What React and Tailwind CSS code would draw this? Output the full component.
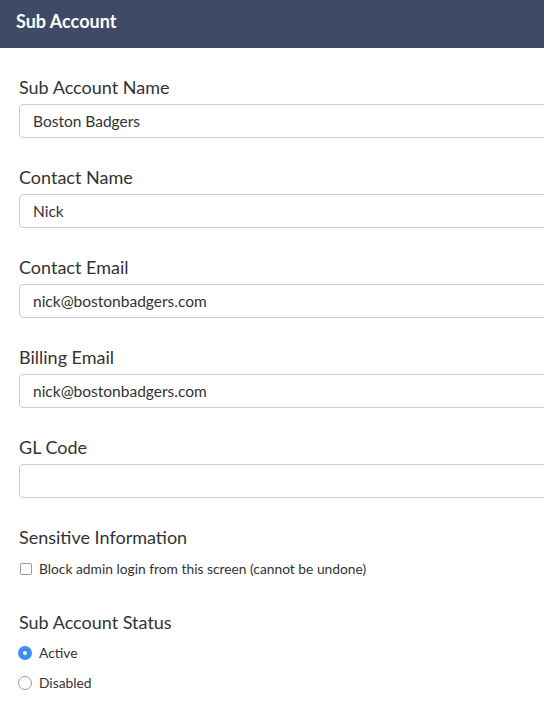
import React from "react";

function Field({ label, value }) {
  return (
    <div className="mb-[29px]">
      <div className="text-[18px] leading-[20px] text-[#333] mb-[7px]">{label}</div>
      <div className="h-[34px] w-[620px] border border-[#cccccc] rounded-[4px] bg-white flex items-center pl-[13px] pt-[1px] text-[15.5px] text-[#333]">
        {value}
      </div>
    </div>
  );
}

function Radio({ checked, label }) {
  return (
    <div className="flex items-center h-[30px]">
      {checked ? (
        <span className="w-[14px] h-[14px] rounded-full bg-[#3b8ef2] flex items-center justify-center ml-[-1px]">
          <span className="w-[4px] h-[4px] rounded-full bg-white" />
        </span>
      ) : (
        <span className="w-[14px] h-[14px] rounded-full border border-[#9a9a9a] bg-white ml-[-1px]" />
      )}
      <span className="ml-[7px] text-[13.8px] text-[#333]">{label}</span>
    </div>
  );
}

export default function App() {
  return (
    <div className="w-[544px] h-[711px] overflow-hidden bg-white" style={{ fontFamily: "Lato, 'Open Sans', sans-serif" }}>
      <div className="h-[48px] bg-[#3f4a66] flex items-center pl-[16px] pb-[6px]">
        <span className="text-white font-bold text-[18px]">Sub Account</span>
      </div>
      <div className="pl-[19px] pt-[29px]">
        <Field label="Sub Account Name" value="Boston Badgers" />
        <Field label="Contact Name" value="Nick" />
        <Field label="Contact Email" value="nick@bostonbadgers.com" />
        <Field label="Billing Email" value="nick@bostonbadgers.com" />
        <Field label="GL Code" value="" />
        <div className="text-[18px] leading-[20px] text-[#333]">Sensitive Information</div>
        <div className="flex items-center h-[22px] mt-[11px]">
          <span className="w-[12px] h-[12px] border border-[#9a9a9a] rounded-[2px] bg-white ml-[1px]" />
          <span className="ml-[7px] text-[13.8px] text-[#333]">Block admin login from this screen (cannot be undone)</span>
        </div>
        <div className="text-[18px] leading-[20px] text-[#333] mt-[32px]">Sub Account Status</div>
        <div className="mt-[6px]">
          <Radio checked label="Active" />
          <Radio label="Disabled" />
        </div>
      </div>
    </div>
  );
}
